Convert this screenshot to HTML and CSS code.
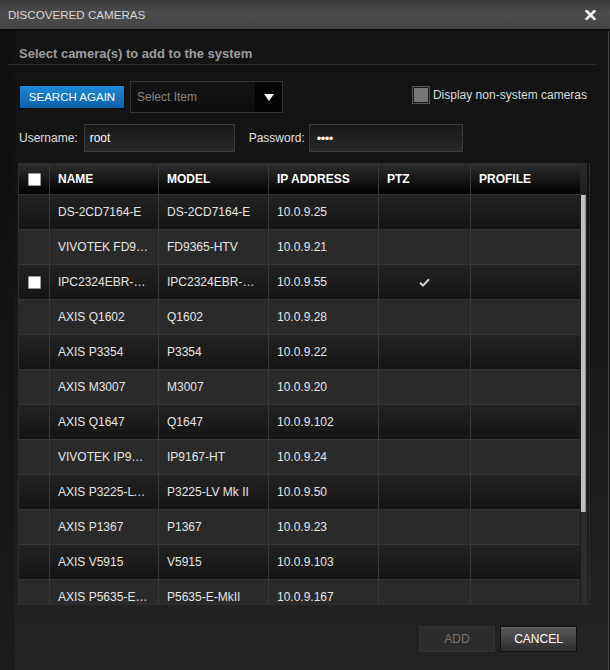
FILE: index.html
```html
<!DOCTYPE html>
<html lang="en">
<head>
  <meta charset="UTF-8" />
  <meta name="viewport" content="width=device-width, initial-scale=1.0"/>
  <title>Discovered Cameras</title>
  <link rel="stylesheet" href="styles.css">
</head>
<body>

<div class="dialog">
  <div class="titlebar">
    <span class="title">DISCOVERED CAMERAS</span>
    <button class="close-btn" aria-label="Close">
      <svg width="11" height="10" viewBox="0 0 11 10"><path d="M1.5 1 L9.5 9 M9.5 1 L1.5 9" stroke="#f0f0f0" stroke-width="2.6" stroke-linecap="square"/></svg>
    </button>
  </div>

  <div class="dialog-body">
    <h2 class="subhead">Select camera(s) to add to the system</h2>

    <div class="toolbar">
      <button class="search-btn">SEARCH AGAIN</button>
      <div class="select-box">
        <span class="select-text">Select Item</span>
        <span class="select-arrow">
          <svg width="10" height="7" viewBox="0 0 10 7"><path d="M0 0 H10 L5 7 Z" fill="#f2f2f2"/></svg>
        </span>
      </div>
      <label class="non-system"><span class="check-box"></span>Display non-system cameras</label>
    </div>

    <div class="credentials">
      <label for="username">Username:</label>
      <input type="text" id="username" value="root" />
      <label for="password" class="pw-label">Password:</label>
      <input type="password" id="password" value="1234" />
    </div>

    <div class="camera-table">
      <div class="table-head">
        <div class="row head-row">
          <div class="cell"><span class="row-check"></span></div>
          <div class="cell">NAME</div>
          <div class="cell">MODEL</div>
          <div class="cell">IP ADDRESS</div>
          <div class="cell">PTZ</div>
          <div class="cell">PROFILE</div>
        </div>
        <div class="scroll-head"></div>
      </div>
      <div class="table-body">
        <div class="rows" id="cameraRows"></div>
        <div class="scroll-track"><div class="scroll-thumb"></div></div>
      </div>
    </div>

    <div class="actions">
      <button class="add-btn" disabled>ADD</button>
      <button class="cancel-btn">CANCEL</button>
    </div>
  </div>
</div>

<script>
  const cameras = [
    { name: 'DS-2CD7164-E', model: 'DS-2CD7164-E', ip: '10.0.9.25' },
    { name: 'VIVOTEK FD9365-HTV', model: 'FD9365-HTV', ip: '10.0.9.21' },
    { name: 'IPC2324EBR-DPZ28', model: 'IPC2324EBR-DPZ28', ip: '10.0.9.55', ptz: true, hover: true },
    { name: 'AXIS Q1602', model: 'Q1602', ip: '10.0.9.28' },
    { name: 'AXIS P3354', model: 'P3354', ip: '10.0.9.22' },
    { name: 'AXIS M3007', model: 'M3007', ip: '10.0.9.20' },
    { name: 'AXIS Q1647', model: 'Q1647', ip: '10.0.9.102' },
    { name: 'VIVOTEK IP9167-HT', model: 'IP9167-HT', ip: '10.0.9.24' },
    { name: 'AXIS P3225-LV Mk II', model: 'P3225-LV Mk II', ip: '10.0.9.50' },
    { name: 'AXIS P1367', model: 'P1367', ip: '10.0.9.23' },
    { name: 'AXIS V5915', model: 'V5915', ip: '10.0.9.103' },
    { name: 'AXIS P5635-E Mk II', model: 'P5635-E-MkII', ip: '10.0.9.167' }
  ];

  const checkSvg = '<svg width="11" height="9" viewBox="0 0 11 9"><path d="M1 4.8 L4 7.6 L10 1.2" fill="none" stroke="#d0d0d0" stroke-width="2"/></svg>';

  function renderCameras() {
    const container = document.getElementById('cameraRows');
    container.innerHTML = '';
    cameras.forEach(cam => {
      const row = document.createElement('div');
      row.className = 'row';
      row.innerHTML = `
        <div class="cell">${cam.hover ? '<span class="row-check"></span>' : ''}</div>
        <div class="cell">${cam.name}</div>
        <div class="cell">${cam.model}</div>
        <div class="cell">${cam.ip}</div>
        <div class="cell ptz">${cam.ptz ? checkSvg : ''}</div>
        <div class="cell"></div>
      `;
      container.appendChild(row);
    });
  }

  renderCameras();
</script>

</body>
</html>
```

FILE: styles.css
```css
html, body {
  margin: 0;
  background: #111;
}
body {
  font-family: Arial, "Liberation Sans", sans-serif;
  font-size: 12px;
  color: #e6e6e6;
}
button {
  font-family: inherit;
}
.dialog {
  width: 610px;
  height: 670px;
  display: flex;
  flex-direction: column;
}
.titlebar {
  height: 29px;
  flex-shrink: 0;
  display: flex;
  align-items: center;
  justify-content: space-between;
  padding: 0 14px 0 8px;
  background: linear-gradient(#3b3b3b, #4c4c4c 45%, #464646);
  border-bottom: 2px solid #0d0d0d;
}
.title {
  color: #d6d6d6;
  font-size: 11.6px;
  padding-bottom: 1px;
}
.close-btn {
  background: none;
  border: none;
  padding: 0;
  display: flex;
  cursor: pointer;
}

.dialog-body {
  flex: 1;
  width: 609px;
  box-sizing: border-box;
  border-right: 1px solid #454545;
  padding: 0 21px 0 18px;
  background:
    linear-gradient(90deg, rgba(0,0,0,0.2) 0, rgba(0,0,0,0.2) 15px, transparent 15px),
    linear-gradient(#131313, #141414 30%, #232323);
}
.subhead {
  margin: 0 -10px 0 -10px;
  padding: 15px 0 3px 11px;
  font-size: 13px;
  line-height: 15px;
  color: #9d9d9d;
  border-bottom: 1px solid #2b2b2b;
}

.toolbar {
  display: flex;
  align-items: center;
  height: 32px;
  margin-top: 16px;
}
.search-btn {
  height: 24px;
  width: 106px;
  margin-left: 1px;
  padding: 0;
  border: 1px solid #0b0b0b;
  background: linear-gradient(#1d8ad8, #0c5fa8);
  color: #fff;
  font-size: 11.5px;
  cursor: pointer;
}
.select-box {
  display: flex;
  width: 153px;
  height: 32px;
  box-sizing: border-box;
  margin-left: 5px;
  border: 1px solid #333;
  background: linear-gradient(#141414, #0c0c0c);
}
.select-text {
  flex: 1;
  padding-left: 6px;
  line-height: 30px;
  color: #858585;
}
.select-arrow {
  width: 27px;
  display: flex;
  align-items: center;
  justify-content: center;
  background: #030303;
}
.non-system {
  margin-left: auto;
  display: flex;
  align-items: center;
  gap: 3px;
  color: #dcdcdc;
  margin-top: -4px;
}
.check-box {
  width: 16px;
  height: 16px;
  border: 1px solid #555;
  background: #767676;
  box-shadow: inset 0 0 0 1px #1a1a1a;
}

.credentials {
  display: flex;
  align-items: center;
  margin-top: 11px;
  padding-left: 1px;
}
.credentials label {
  color: #e0e0e0;
  margin-right: 6px;
}
.credentials .pw-label {
  margin-left: 14px;
  margin-right: 4px;
}
.credentials input {
  height: 28px;
  box-sizing: border-box;
  border: 1px solid #3a3a3a;
  background: linear-gradient(#191919, #282828);
  color: #fff;
  font-family: inherit;
  font-size: 12px;
  padding: 0 5px;
  outline: none;
}
#username {
  width: 151px;
}
#password {
  width: 154px;
  font-size: 13px;
  letter-spacing: -0.5px;
  padding-left: 7px;
}

.camera-table {
  margin-top: 11px;
  width: 570px;
  border: 1px solid #2e2e2e;
  border-top: none;
}
.table-head, .table-body {
  display: flex;
}
.row {
  display: grid;
  grid-template-columns: 30px 109px 110px 110px 92px 110px;
  height: 35px;
  box-sizing: border-box;
  border-bottom: 1px solid #353535;
  background: linear-gradient(#232323, #141414);
}
.row:nth-child(even) {
  background: #2a2a2a;
}
.head-row {
  height: 32px;
  border-bottom: 1px solid #333;
  background: linear-gradient(#2f2f2f, #000);
  font-weight: bold;
  color: #fff;
}
.cell {
  border-left: 1px solid #383838;
  padding: 0 9px 0 8px;
  display: flex;
  align-items: center;
  min-width: 0;
  overflow: hidden;
  white-space: nowrap;
}
.row .cell {
  display: block;
  line-height: 34px;
  text-overflow: ellipsis;
}
.head-row .cell {
  line-height: 32px;
}
.row .cell:first-child {
  border-left: none;
  padding: 0;
  display: flex;
  align-items: center;
  justify-content: center;
}
.row .cell.ptz {
  display: flex;
  align-items: center;
  justify-content: center;
  padding: 0;
}
.row-check {
  width: 11px;
  height: 11px;
  background: #fff;
  border: 1px solid #9a9a9a;
  border-radius: 1px;
  margin-top: 1px;
}
.scroll-head {
  width: 7px;
  background: linear-gradient(#2c2828, #231f1f);
  border-bottom: 1px solid #333;
}
.rows {
  height: 409px;
  overflow: hidden;
}
.scroll-track {
  width: 7px;
  height: 409px;
  background: #2c2c2c;
  border-left: 1px solid #1e1e1e;
  box-sizing: border-box;
}
.scroll-thumb {
  width: 5px;
  height: 317px;
  background: #c2c2c2;
  border-right: 1px solid #8a8a8a;
  box-sizing: border-box;
}

.actions {
  display: flex;
  justify-content: flex-end;
  gap: 5px;
  margin-top: 21px;
  padding-right: 10px;
}
.actions button {
  height: 26px;
  font-size: 12px;
  padding: 0;
  cursor: pointer;
}
.add-btn {
  width: 76px;
  border: 1px solid #333;
  background: #2c2c2c;
  color: #767676;
}
.cancel-btn {
  width: 77px;
  border: 1px solid #0f0f0f;
  background: linear-gradient(#5a5a5a, #2d2d2d);
  box-shadow: inset 0 1px 0 #666;
  color: #fff;
}
```
